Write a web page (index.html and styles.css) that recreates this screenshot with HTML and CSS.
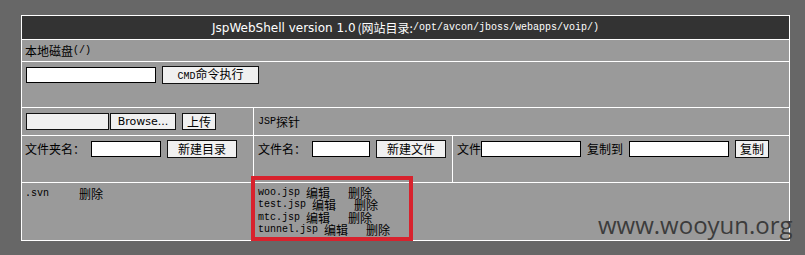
FILE: index.html
```html
<!DOCTYPE html>
<html lang="zh">

<head>
    <meta charset="UTF-8">
    <title>JspWebShell</title>
    <link rel="stylesheet" href="styles.css">
</head>

<body>
    <div class="shell">
        <!-- title bar -->
        <div class="row head">
            <span class="title">JspWebShell version 1.0</span><span>(网站目录:</span><span class="m">/opt/avcon/jboss/webapps/voip/)</span>
        </div>

        <div class="row disk">本地磁盘<span class="m">(/)</span></div>

        <!-- command line -->
        <div class="row cmd">
            <input type="text" class="txt cmd-input">
            <button type="button" class="btn cmd-btn"><span class="m">CMD</span>命令执行</button>
        </div>

        <div class="row upload">
            <div class="cell left">
                <span class="file-box"></span>
                <button type="button" class="btn browse">Browse...</button>
                <button type="button" class="btn up">上传</button>
            </div>
            <div class="cell right probe"><span class="m">JSP</span>探针</div>
        </div>

        <div class="row tools">
            <div class="cell left">
                <span class="label">文件夹名：</span>
                <input type="text" class="txt dir-input">
                <button type="button" class="btn new-btn">新建目录</button>
            </div>
            <div class="cell mid">
                <span class="label">文件名：</span>
                <input type="text" class="txt file-input">
                <button type="button" class="btn new-btn">新建文件</button>
            </div>
            <div class="cell right">
                <span>文件</span>
                <input type="text" class="txt copy-input">
                <span class="copy-to">复制到</span>
                <input type="text" class="txt copy-input">
                <button type="button" class="btn copy-btn">复制</button>
            </div>
        </div>

        <!-- listing -->
        <div class="row list">
            <div class="cell left dirs">
                <span class="m">.svn</span><span class="del">删除</span>
            </div>
            <div class="cell right files">
                <div class="file"><span class="m">woo.jsp </span>编辑<span class="gap"></span>删除</div>
                <div class="file"><span class="m">test.jsp </span>编辑<span class="gap"></span>删除</div>
                <div class="file"><span class="m">mtc.jsp </span>编辑<span class="gap"></span>删除</div>
                <div class="file"><span class="m">tunnel.jsp </span>编辑<span class="gap"></span>删除</div>
                <div class="mark"></div>
            </div>
        </div>
    </div>

    <div class="watermark">www.wooyun.org</div>
</body>

</html>
```

FILE: styles.css
```css
body {
    margin: 0;
    padding: 15px 0 0 21px;
    height: 255px;
    box-sizing: border-box;
    background-color: #676767;
    font-family: "Noto Sans CJK SC", sans-serif;
    font-size: 12px;
    color: #000;
    position: relative;
    overflow: hidden;
}

.m {
    font-family: "Liberation Mono", monospace;
    font-size: 10px;
    white-space: pre;
}

.shell {
    width: 769px;
    box-sizing: border-box;
    border: 1px solid #fff;
    background-color: #9a9a9a;
}

.row {
    display: flex;
    border-top: 1px solid #fff;
}

.head {
    border-top: none;
    height: 23px;
    align-items: center;
    justify-content: center;
    background-color: #333;
    color: #fff;
}

.title {
    font-family: "DejaVu Sans", sans-serif;
    font-size: 12px;
    margin-right: 2px;
}

.disk {
    height: 21px;
    align-items: center;
    padding-left: 3px;
}

.cmd {
    height: 46px;
    box-sizing: border-box;
    padding: 4px 0 0 4px;
    align-items: flex-start;
    gap: 6px;
}

.txt {
    margin: 0;
    padding: 0;
    height: 16px;
    box-sizing: border-box;
    border: 1px solid #000;
    background-color: #fff;
}

.btn {
    margin: 0;
    padding: 0;
    height: 18px;
    box-sizing: border-box;
    border: 1px solid #111;
    background-color: #f0f0f0;
    font-family: "Noto Sans CJK SC", sans-serif;
    font-size: 12px;
    line-height: 14px;
    color: #000;
}

.cmd-input {
    width: 130px;
    margin-top: 1px;
}

.cmd-btn {
    width: 97px;
}

.cell {
    display: flex;
    align-items: center;
}

.left {
    width: 232px;
    border-right: 1px solid #fff;
    padding-left: 3px;
    box-sizing: border-box;
    flex-shrink: 0;
}

.mid {
    width: 199px;
    box-sizing: border-box;
    border-right: 1px solid #fff;
    padding-left: 4px;
    flex-shrink: 0;
}

.right {
    flex: 1;
    padding-left: 4px;
}

.upload {
    height: 27px;
}

.upload .left {
    padding-left: 4px;
}

.file-box {
    width: 83px;
    height: 17px;
    box-sizing: border-box;
    border: 1px solid #111;
    background-color: #efefef;
}

.browse {
    width: 66px;
    height: 17px;
    margin-left: 1px;
    font-family: "DejaVu Sans", sans-serif;
    font-size: 11px;
}

.up {
    width: 34px;
    height: 17px;
    margin-left: 6px;
}

.tools {
    height: 46px;
}

.tools .cell {
    align-items: flex-start;
    padding-top: 4px;
    line-height: 18px;
}

.tools .txt {
    margin-top: 1px;
}

.label {
    margin-right: 6px;
}

.dir-input {
    width: 70px;
}

.file-input {
    width: 58px;
}

.new-btn {
    width: 70px;
    margin-left: 6px;
}

.copy-input {
    width: 100px;
}

.copy-to {
    margin: 0 6px;
}

.copy-btn {
    width: 34px;
    margin-left: 6px;
}

.list {
    height: 57px;
}

.list .cell {
    align-items: flex-start;
    flex-direction: column;
}

.dirs {
    flex-direction: row !important;
    padding-top: 5px;
    line-height: 12px;
}

.dirs .del {
    margin-left: 30px;
}

.files {
    position: relative;
    padding-top: 4px;
}

.file {
    height: 12.3px;
    line-height: 12px;
    display: flex;
    align-items: center;
}

.gap {
    display: inline-block;
    width: 18px;
}

/* red annotation box */
.mark {
    position: absolute;
    left: -3px;
    top: -7px;
    width: 162px;
    height: 65px;
    box-sizing: border-box;
    border: 4px solid #d8222d;
}

.watermark {
    position: absolute;
    left: 598px;
    top: 210px;
    font-family: "Open Sans", sans-serif;
    font-size: 24px;
    line-height: 30px;
    color: #3c3c3c;
}
```
